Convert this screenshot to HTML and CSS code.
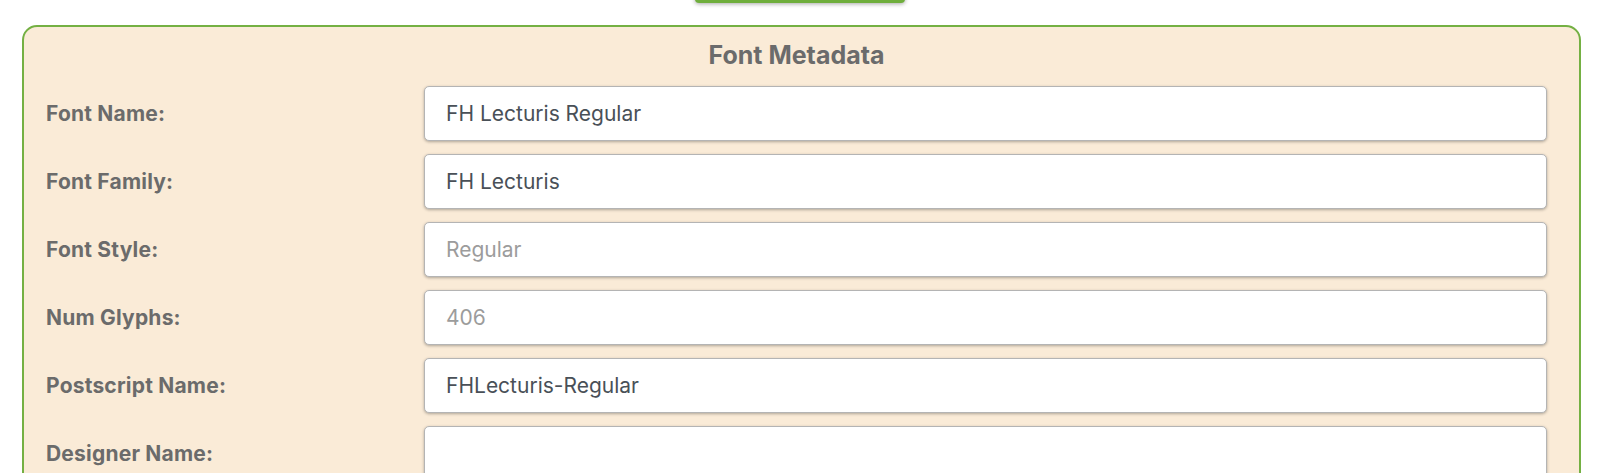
FILE: index.html
```html
<!DOCTYPE html>
<html lang="en">

<head>
	<meta charset="UTF-8">
	<meta name="viewport" content="width=device-width, initial-scale=1.0">
	<title>Font Metadata</title>
	<link rel="stylesheet" href="styles.css">
</head>

<body>

	<button class="load-button" type="button" aria-label="Load font"></button>

	<div class="metadata">
		<h2 class="metadata-title">Font Metadata</h2>
		<div class="metadata-form">
			<label class="field-label" for="fontName">Font Name:</label>
			<input class="field-input" id="fontName" type="text" value="FH Lecturis Regular">

			<label class="field-label" for="fontFamily">Font Family:</label>
			<input class="field-input" id="fontFamily" type="text" value="FH Lecturis">

			<label class="field-label" for="fontStyle">Font Style:</label>
			<input class="field-input" id="fontStyle" type="text" placeholder="Regular">

			<label class="field-label" for="numGlyphs">Num Glyphs:</label>
			<input class="field-input" id="numGlyphs" type="text" placeholder="406">

			<label class="field-label" for="postscriptName">Postscript Name:</label>
			<input class="field-input" id="postscriptName" type="text" value="FHLecturis-Regular">

			<label class="field-label" for="designerName">Designer Name:</label>
			<input class="field-input" id="designerName" type="text">
		</div>
	</div>

</body>

</html>
```

FILE: styles.css
```css
body {
	margin: 0;
	font-family: "Inter", "Liberation Sans", sans-serif;
	background-color: #fff;
}

.load-button {
	display: block;
	width: 210px;
	height: 40px;
	margin: -37px auto 0;
	border: none;
	border-radius: 4px;
	background-color: #6fae3c;
	box-shadow: 0 1px 4px rgba(0, 0, 0, 0.35);
}

.metadata {
	margin: 22px 19px 0 22px;
	padding: 14px 32px 20px 22px;
	border: 2px solid #74b043;
	border-radius: 15px;
	background-color: antiquewhite;
}

.metadata-title {
	margin: 0 0 16px;
	font-size: 25px;
	font-weight: 700;
	line-height: 29px;
	text-align: center;
	color: #6b6b6b;
}

.metadata-form {
	display: grid;
	grid-template-columns: 378px 1fr;
	grid-auto-rows: 55px;
	row-gap: 13px;
	align-items: center;
}

.field-label {
	font-size: 21px;
	font-weight: 700;
	letter-spacing: 0.2px;
	color: #6b6b6b;
}

.field-input {
	box-sizing: border-box;
	height: 55px;
	width: 100%;
	padding: 0 21px;
	border: 1px solid #b4b4b4;
	border-radius: 5px;
	background-color: #fff;
	font-family: inherit;
	font-size: 21px;
	color: #495057;
	box-shadow: 0 1px 3px rgba(0, 0, 0, 0.3);
	outline: none;
}

.field-input::placeholder {
	color: #9c9c9c;
}
```
